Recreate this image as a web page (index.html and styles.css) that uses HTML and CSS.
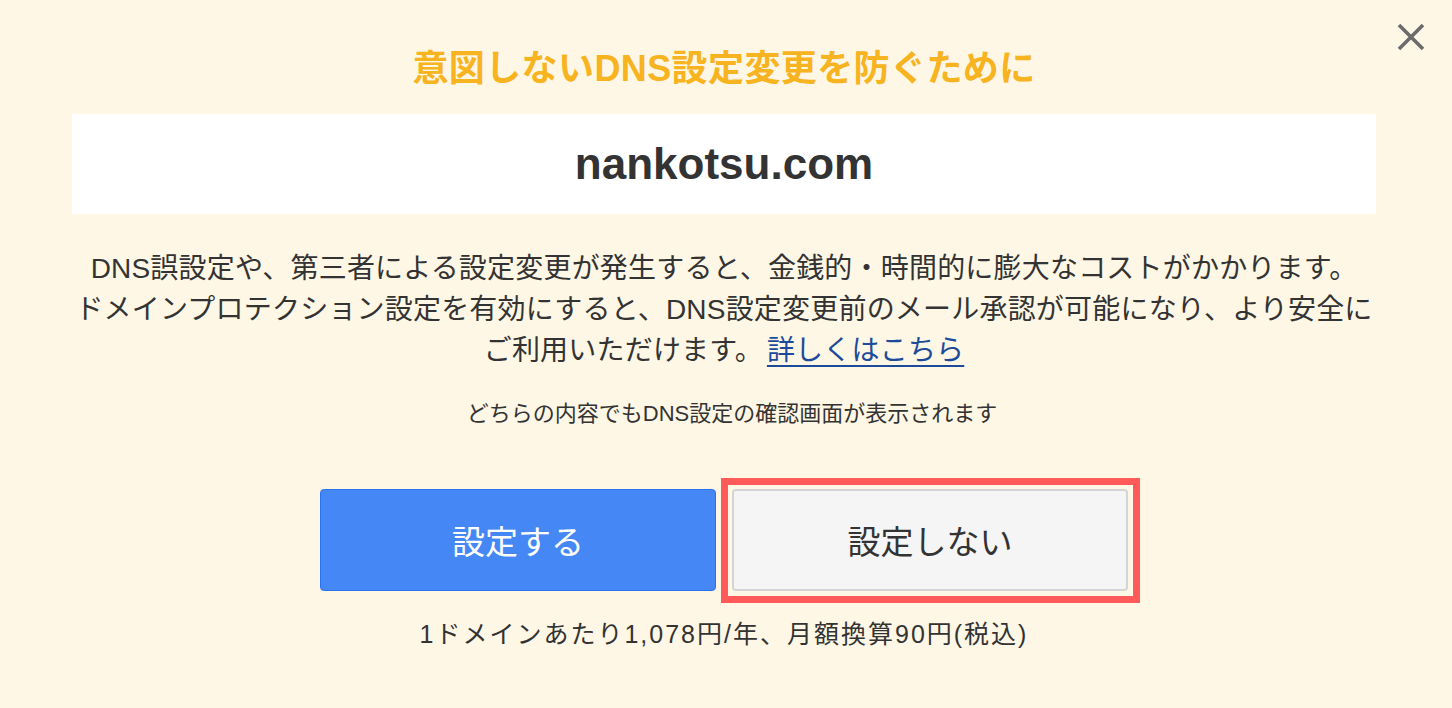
FILE: index.html
```html
<!DOCTYPE html>
<html lang="ja">
<head>
<meta charset="utf-8">
<title>ドメインプロテクション</title>
<link rel="stylesheet" href="styles.css">
</head>
<body>
<div class="modal">
  <button class="close" aria-label="閉じる">
    <svg width="28" height="28" viewBox="0 0 28 28"><path d="M2 2 L26 26 M26 2 L2 26" stroke="#6b6b6b" stroke-width="3.6" stroke-linecap="butt" fill="none"/></svg>
  </button>
  <h1 class="title">意図しないDNS設定変更を防ぐために</h1>
  <div class="domain-box"><span class="domain">nankotsu.com</span></div>
  <p class="desc">DNS誤設定や、第三者による設定変更が発生すると、金銭的・時間的に膨大なコストがかかります。<br>ドメインプロテクション設定を有効にすると、DNS設定変更前のメール承認が可能になり、より安全に<br>ご利用いただけます。<a class="link" href="#">詳しくはこちら</a></p>
  <p class="note">どちらの内容でもDNS設定の確認画面が表示されます</p>
  <div class="actions">
    <button class="btn btn-primary">設定する</button>
    <button class="btn btn-secondary">設定しない</button>
  </div>
  <p class="price">1ドメインあたり1,078円/年、月額換算90円(税込)</p>
</div>
</body>
</html>
```
FILE: styles.css
```css
html, body {
  margin: 0;
  padding: 0;
  background: #fef7e5;
}
body {
  font-family: "Liberation Sans", "Noto Sans CJK JP", sans-serif;
  color: #333333;
  width: 1452px;
  height: 708px;
  overflow: hidden;
}
.modal {
  position: relative;
  padding: 45px 76px 0 72px;
  display: flex;
  flex-direction: column;
  align-items: center;
}
.close {
  position: absolute;
  top: 23px;
  right: 27px;
  width: 28px;
  height: 28px;
  padding: 0;
  border: 0;
  background: transparent;
  cursor: pointer;
}
.close svg { display: block; }
.title {
  margin: 0;
  font-size: 36px;
  line-height: 48px;
  font-weight: 700;
  color: #f8b321;
  letter-spacing: 0.4px;
}
.domain-box {
  margin-top: 21px;
  align-self: stretch;
  height: 100px;
  background: #ffffff;
  display: flex;
  align-items: center;
  justify-content: center;
}
.domain {
  font-size: 44px;
  line-height: 1;
  font-weight: 700;
  color: #333333;
}
.desc {
  margin: 34px 0 0;
  font-size: 28px;
  line-height: 41px;
  letter-spacing: 0.2px;
  text-align: center;
  color: #333333;
}
.link {
  color: #1d4b9b;
  text-decoration: underline;
  text-underline-offset: 5px;
  text-decoration-thickness: 2px;
  margin-left: 4px;
}
.note {
  margin: 27px 0 0 16px;
  font-size: 22px;
  line-height: 32px;
  color: #333333;
}
.actions {
  margin-top: 59px;
  display: flex;
  gap: 16px;
}
.btn {
  width: 396px;
  height: 102px;
  border-radius: 4px;
  font-family: "Noto Sans CJK JP", sans-serif;
  font-size: 33px;
  cursor: pointer;
}
.btn-primary {
  background: #4587f5;
  border: 1px solid #2c74ef;
  color: #ffffff;
}
.btn-secondary {
  position: relative;
  background: #f5f5f5;
  border: 2px solid #d4d4d4;
  color: #333333;
}
.btn-secondary::after {
  content: "";
  position: absolute;
  top: -13px;
  left: -13px;
  right: -14px;
  bottom: -14px;
  border: 7px solid #fe5a5a;
  pointer-events: none;
}
.price {
  margin: 27px 0 0;
  font-size: 25px;
  line-height: 32px;
  letter-spacing: 2px;
  color: #333333;
}
```
